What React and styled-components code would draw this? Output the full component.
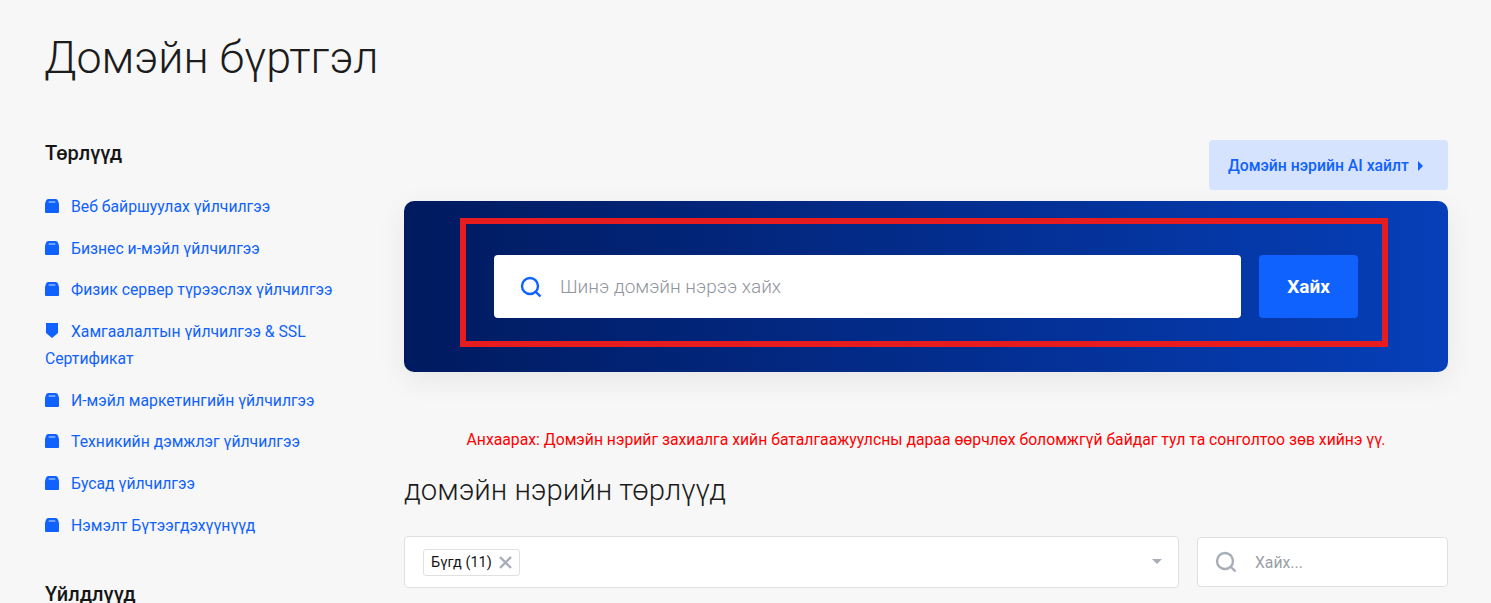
import React from 'react';
import styled, { createGlobalStyle } from 'styled-components';

const categories = [
  { label: 'Веб байршуулах үйлчилгээ', icon: 'box' },
  { label: 'Бизнес и-мэйл үйлчилгээ', icon: 'box' },
  { label: 'Физик сервер түрээслэх үйлчилгээ', icon: 'box' },
  { label: 'Хамгаалалтын үйлчилгээ & SSL Сертификат', icon: 'shield' },
  { label: 'И-мэйл маркетингийн үйлчилгээ', icon: 'box' },
  { label: 'Техникийн дэмжлэг үйлчилгээ', icon: 'box' },
  { label: 'Бусад үйлчилгээ', icon: 'box' },
  { label: 'Нэмэлт Бүтээгдэхүүнүүд', icon: 'box' },
];

const SearchIcon = ({ size, color }) => (
  <svg width={size} height={size} viewBox="0 0 22 22" fill="none" stroke={color} strokeWidth="2.4">
    <circle cx="10" cy="10" r="8" />
    <path d="M15.8 15.8 L20.5 20.5" />
  </svg>
);

const CategoryIcon = ({ type }) => (
  <IconBox>
    {type === 'box' ? (
      <svg width="14" height="14" viewBox="0 0 14 14" fill="#0f62fe">
        <path d="M3.5 0 H10.5 Q12.6 0 13.2 2.2 L14 5 V13 Q14 14 13 14 H1 Q0 14 0 13 V5 L.8 2.2 Q1.4 0 3.5 0 Z" />
        <rect x="3.5" y="2.4" width="7" height="1.2" rx=".6" fill="#cfe0ff" />
      </svg>
    ) : (
      <svg width="14" height="15" viewBox="0 0 14 15" fill="#0f62fe">
        <path d="M1 0 H13 V10 L7 15 L1 10 Z" />
      </svg>
    )}
  </IconBox>
);

export default function App() {
  return (
    <Page>
      <GlobalStyle />
      <Title>Домэйн бүртгэл</Title>
      <Columns>
        <Sidebar>
          <SideHeading>Төрлүүд</SideHeading>
          <CategoryList>
            {categories.map((c) => (
              <Category key={c.label}>
                <CategoryIcon type={c.icon} />
                {c.label}
              </Category>
            ))}
          </CategoryList>
          <SideHeading>Үйлдлүүд</SideHeading>
        </Sidebar>
        <Main>
          <AiRow>
            <AiButton>
              Домэйн нэрийн AI хайлт
              <Caret />
            </AiButton>
          </AiRow>
          <Banner>
            <Frame>
              <SearchField>
                <SearchIcon size={22} color="#0f62fe" />
                <SearchInput placeholder="Шинэ домэйн нэрээ хайх" />
              </SearchField>
              <SearchButton>Хайх</SearchButton>
            </Frame>
          </Banner>
          <Warning>
            Анхаарах: Домэйн нэрийг захиалга хийн баталгаажуулсны дараа өөрчлөх боломжгүй байдаг тул та сонголтоо зөв хийнэ үү.
          </Warning>
          <SectionTitle>домэйн нэрийн төрлүүд</SectionTitle>
          <Filters>
            <SelectBox>
              <Tag>
                Бүгд (11)
                <TagClose>
                  <svg width="13" height="13" viewBox="0 0 13 13" stroke="#a8aeb8" strokeWidth="2.4">
                    <path d="M1 1 L12 12 M12 1 L1 12" />
                  </svg>
                </TagClose>
              </Tag>
              <SelectCaret />
            </SelectBox>
            <FilterSearch>
              <SearchIcon size={22} color="#a8aeb8" />
              <FilterInput placeholder="Хайх..." />
            </FilterSearch>
          </Filters>
        </Main>
      </Columns>
    </Page>
  );
}

const GlobalStyle = createGlobalStyle`
  html, body {
    margin: 0;
    height: 100%;
    overflow: hidden;
    background: #f7f7f7;
  }
  * {
    box-sizing: border-box;
  }
  body {
    font-family: Roboto, "Liberation Sans", sans-serif;
  }
`;

const Page = styled.div`
  height: 603px;
  overflow: hidden;
  padding: 30px 43px 0 45px;
`;
const Title = styled.h1`
  margin: 0 0 0 -1px;
  font-size: 44.8px;
  line-height: 56px;
  font-weight: 300;
  color: #1c1c1c;
`;
const Columns = styled.div`
  display: flex;
  gap: 44px;
  margin-top: 54px;
`;
const Sidebar = styled.aside`
  width: 315px;
  flex: none;
`;
const SideHeading = styled.h3`
  margin: -1px 0 0;
  font-size: 20px;
  line-height: 28px;
  font-weight: 500;
  color: #161616;
`;
const CategoryList = styled.ul`
  list-style: none;
  margin: 26px 0 42px;
  padding: 0;
  display: flex;
  flex-direction: column;
  gap: 14.7px;
`;
const Category = styled.li`
  font-size: 15.75px;
  line-height: 27px;
  color: #0f62fe;
`;
const IconBox = styled.span`
  display: inline-block;
  width: 26px;
  svg {
    display: inline-block;
    vertical-align: -1px;
  }
`;
const Main = styled.main`
  flex: 1;
  min-width: 0;
`;
const AiRow = styled.div`
  display: flex;
  justify-content: flex-end;
`;
const AiButton = styled.button`
  display: flex;
  align-items: center;
  gap: 9px;
  height: 50px;
  width: 239px;
  padding: 0 0 0 19px;
  border: 0;
  border-radius: 4px;
  background: #d6e3ff;
  color: #0f62fe;
  font: 500 15.75px Roboto, sans-serif;
`;
const Caret = styled.span`
  width: 0;
  height: 0;
  margin-top: 1px;
  border-left: 5px solid #0f62fe;
  border-top: 5px solid transparent;
  border-bottom: 5px solid transparent;
`;
const Banner = styled.section`
  margin-top: 11px;
  height: 171px;
  padding: 17px 60px 25px 56px;
  border-radius: 10px;
  background: linear-gradient(90deg, #001a5f 0%, #063fb9 100%);
  box-shadow: 0 8px 30px rgba(0, 0, 0, 0.07);
`;
const Frame = styled.div`
  display: flex;
  gap: 18px;
  height: 129px;
  padding: 31px 24px 23px 28px;
  border: 6px solid #e61c1f;
`;
const SearchField = styled.div`
  flex: 1;
  display: flex;
  align-items: center;
  gap: 16px;
  padding-left: 26px;
  background: #fff;
  border-radius: 4px;
`;
const SearchInput = styled.input`
  flex: 1;
  min-width: 0;
  border: 0;
  outline: 0;
  background: none;
  font: 300 19px Roboto, sans-serif;
  color: #161616;
  &::placeholder {
    color: #90959c;
    opacity: 1;
  }
`;
const SearchButton = styled.button`
  width: 99px;
  border: 0;
  border-radius: 4px;
  background: #0f62fe;
  color: #fff;
  font: 700 19px Roboto, sans-serif;
`;
const Warning = styled.p`
  margin: 58px 0 0;
  font-size: 15.75px;
  line-height: 20px;
  color: #f00;
  text-align: center;
`;
const SectionTitle = styled.h2`
  margin: 20px 0 0;
  font-size: 29.3px;
  line-height: 40px;
  font-weight: 300;
  color: #1c1c1c;
`;
const Filters = styled.div`
  display: flex;
  align-items: center;
  gap: 18px;
  margin-top: 26px;
`;
const SelectBox = styled.div`
  position: relative;
  flex: 1;
  height: 52px;
  display: flex;
  align-items: center;
  padding-left: 18px;
  background: #fff;
  border: 1px solid #e0e0e0;
  border-radius: 4px;
`;
const Tag = styled.span`
  display: flex;
  align-items: center;
  gap: 7px;
  height: 27px;
  width: 97px;
  padding-left: 7px;
  background: #fff;
  border: 1px solid #e0e0e0;
  border-radius: 3px;
  font-size: 14.5px;
  color: #161616;
`;
const TagClose = styled.span`
  display: flex;
`;
const SelectCaret = styled.span`
  position: absolute;
  right: 16px;
  top: 22px;
  width: 0;
  height: 0;
  border-top: 5px solid #a8aeb8;
  border-left: 5px solid transparent;
  border-right: 5px solid transparent;
`;
const FilterSearch = styled.div`
  width: 251px;
  height: 50px;
  display: flex;
  align-items: center;
  gap: 16px;
  padding-left: 17px;
  background: #fff;
  border: 1px solid #e0e0e0;
  border-radius: 4px;
`;
const FilterInput = styled.input`
  flex: 1;
  min-width: 0;
  border: 0;
  outline: 0;
  background: none;
  font: 400 15.75px Roboto, sans-serif;
  &::placeholder {
    color: #9b9fa6;
    opacity: 1;
  }
`;
